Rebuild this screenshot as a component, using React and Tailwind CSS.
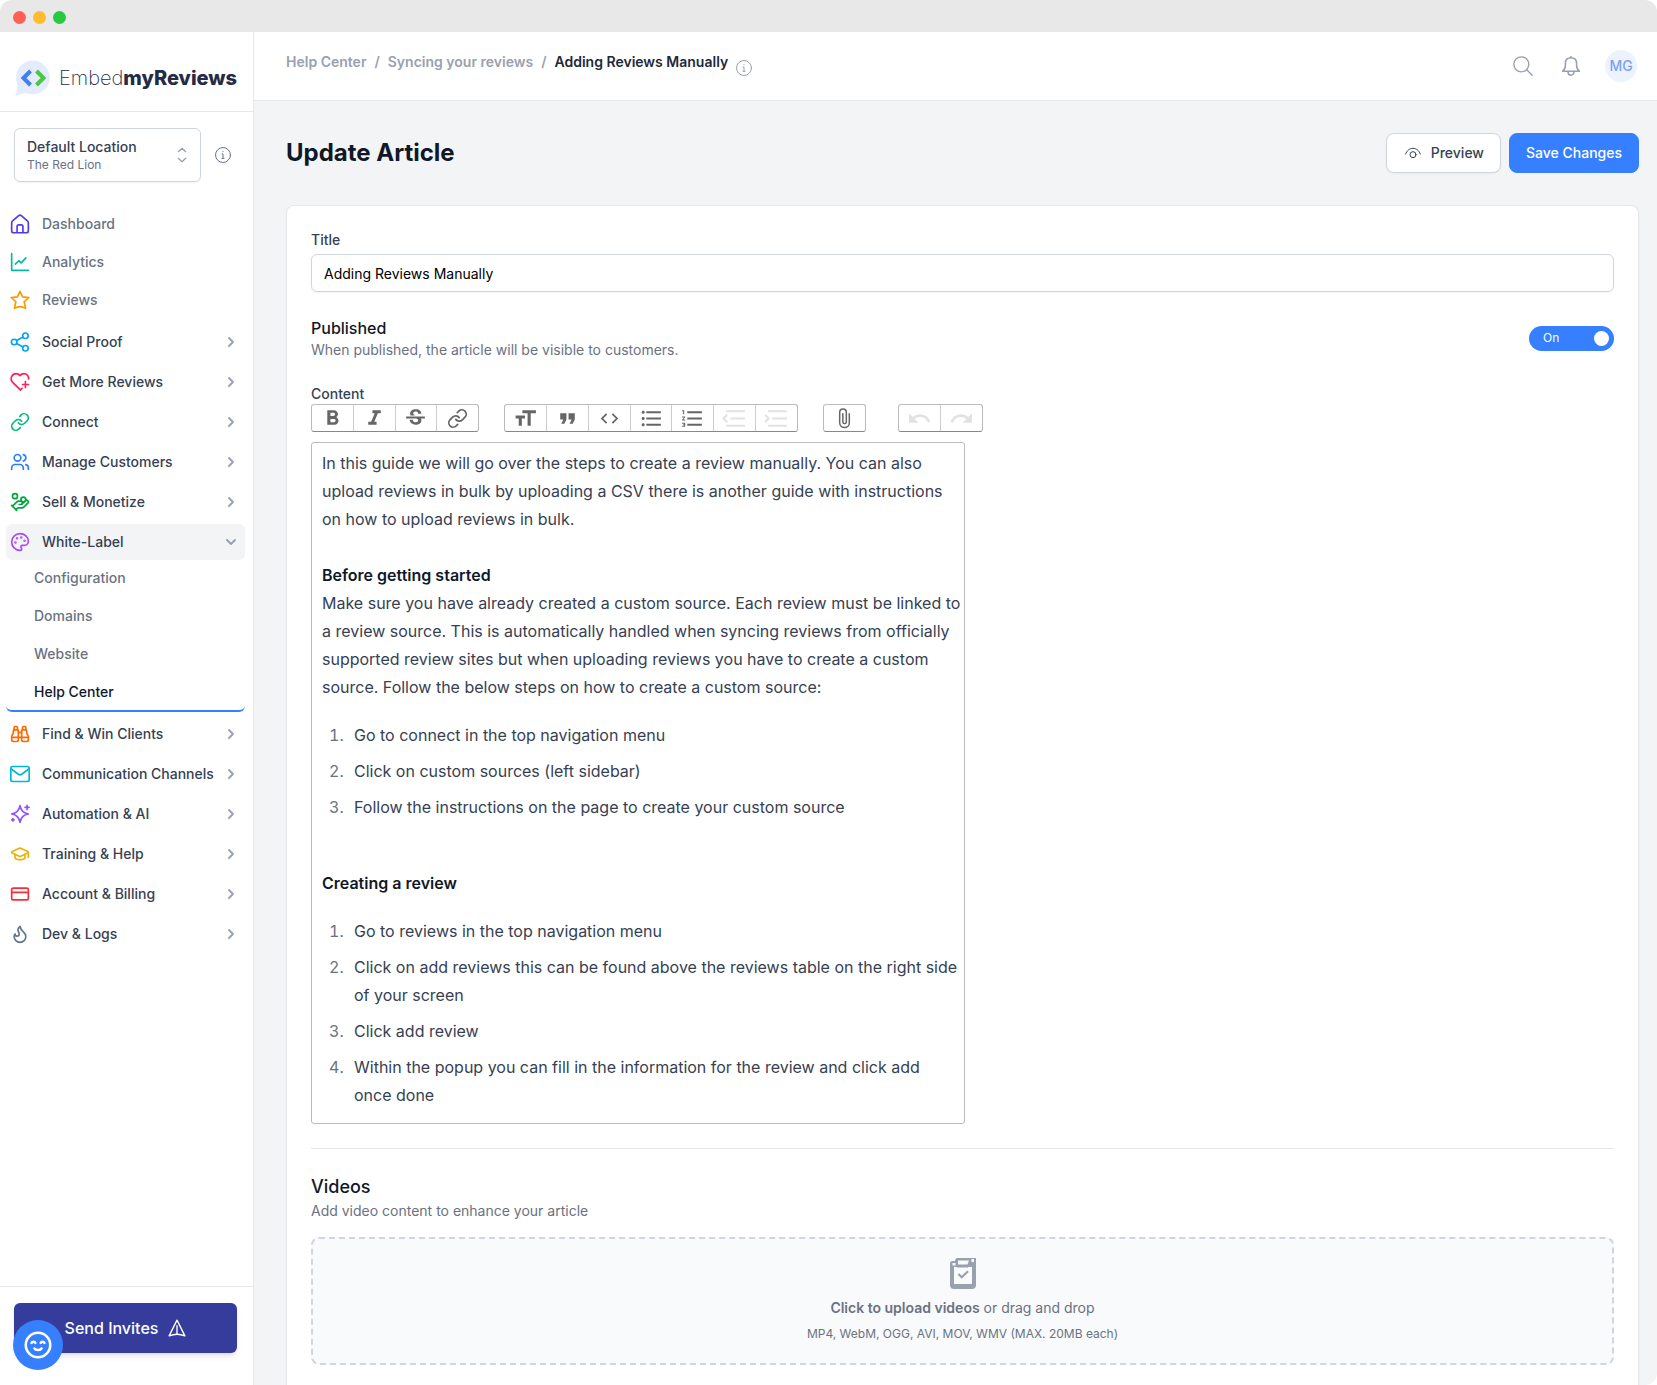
import { useState } from "react";
import {
  Binoculars,
  ChevronDown,
  ChevronRight,
  CreditCard,
  Flame,
  GraduationCap,
  HandCoins,
  Link,
  Palette,
  Users,
} from "lucide-react";
import {
  MdCode,
  MdFormatBold,
  MdFormatItalic,
  MdFormatListBulleted,
  MdFormatListNumbered,
  MdFormatQuote,
  MdFormatSize,
  MdRedo,
  MdStrikethroughS,
  MdUndo,
} from "react-icons/md";

function Svg({ children, className, strokeWidth = 2 }) {
  return (
    <svg
      viewBox="0 0 24 24"
      fill="none"
      stroke="currentColor"
      strokeWidth={strokeWidth}
      strokeLinecap="round"
      strokeLinejoin="round"
      className={className}
      aria-hidden="true"
    >
      {children}
    </svg>
  );
}

function HomeIcon({ className }) {
  return (
    <Svg className={className}>
      <path d="M2 10.500a3 3 0 0 1 1.100-2.300l7-6a3 3 0 0 1 3.800 0l7 6A3 3 0 0 1 22 10.500V20a2.500 2.500 0 0 1-2.500 2.500h-15A2.500 2.500 0 0 1 2 20z" />
      <path d="M8.500 22v-7a2 2 0 0 1 2-2h3a2 2 0 0 1 2 2v7" />
    </Svg>
  );
}

function AnalyticsIcon({ className }) {
  return (
    <Svg className={className}>
      <path d="M2 2v20h20" />
      <path d="m6.500 14.500 4-4 3 2.500 5.500-6" />
    </Svg>
  );
}

function StarIcon({ className }) {
  return (
    <Svg className={className}>
      <path d="m12 1.500 3.100 6.800 7.400.8-5.500 5 1.700 7.900c-2-1.100-4.700-2-6.700-2s-4.700.9-6.700 2L7 14.100l-5.500-5 7.400-.8z" />
    </Svg>
  );
}

function ShareIcon({ className }) {
  return (
    <Svg className={className}>
      <circle cx="5" cy="12" r="3.300" />
      <circle cx="18.500" cy="4.500" r="3.300" />
      <circle cx="18.500" cy="19.500" r="3.300" />
      <path d="m8 10.300 7.600-4.200M8 13.700l7.600 4.200" />
    </Svg>
  );
}

function HeartPlusIcon({ className }) {
  return (
    <Svg className={className}>
      <path d="M12.500 21.500 3.200 12.500C-.8 8.300 2.300 2 7.300 2c2 0 3.500.9 4.700 2.300C13.200 2.900 14.700 2 16.700 2c3.600 0 6 3 5.500 6.300" />
      <path d="M18.500 11.500v7M15 15h7" />
      <path d="m12.500 21.500 2-1.800" />
    </Svg>
  );
}

function MailIcon({ className }) {
  return (
    <Svg className={className}>
      <rect x="1" y="3" width="22" height="18" rx="2" />
      <path d="m1.500 6 8.500 6.300a3.400 3.400 0 0 0 4 0L22.500 6" />
    </Svg>
  );
}

function SparklesIcon({ className }) {
  return (
    <Svg className={className}>
      <path d="M12 2c1 5.800 3.500 9 10 10-6.500 1-9 4.200-10 10-1-5.800-3.500-9-10-10 6.500-1 9-4.200 10-10z" />
      <path d="M20.500 1.500v5M18 4h5M3.500 17.500v3M2 19h3" />
    </Svg>
  );
}

function InfoIcon({ className }) {
  return (
    <Svg className={className} strokeWidth={1.5}>
      <circle cx="12" cy="12" r="11.200" />
      <path d="M10.500 10.500H12V17M10.500 17h3M12 6.800v.4" />
    </Svg>
  );
}

function SearchIcon({ className }) {
  return (
    <Svg className={className} strokeWidth={1.7}>
      <circle cx="10" cy="10" r="9" />
      <path d="m16.500 16.500 6.500 6.500" />
    </Svg>
  );
}

function BellIcon({ className }) {
  return (
    <Svg className={className} strokeWidth={1.9}>
      <path d="M2 18.200c2.300-1.700 3.300-3.700 3.300-7V8.800C5.300 4.600 8 2 12 2s6.700 2.600 6.700 6.800v2.400c0 3.300 1 5.300 3.300 7z" />
      <path d="M12 2V.8M8.500 18.500v1a3.500 3.500 0 0 0 7 0v-1" />
    </Svg>
  );
}

function EyeIcon({ className }) {
  return (
    <Svg className={className} strokeWidth={1.5}>
      <path d="M1 13.500C3 8 7 5 12 5s9 3 11 8.500" />
      <circle cx="12" cy="14.500" r="4.500" />
    </Svg>
  );
}

function SendIcon({ className }) {
  return (
    <Svg className={className} strokeWidth={1.8}>
      <path d="M12 1.500 1.500 22.500c3.500-1.400 7-2.200 10.500-2.200s7 .8 10.500 2.200z" />
      <path d="M12 9v11" />
    </Svg>
  );
}

function ClipboardIcon({ className }) {
  return (
    <svg viewBox="0 0 28 32" fill="none" className={className} aria-hidden="true">
      <path
        fill="currentColor"
        fillRule="evenodd"
        d="M8 0h19v27.500a4 4 0 0 1-4 3.500H5a4 4 0 0 1-4-3.500V5.500A2.500 2.500 0 0 1 3.500 3H6a3 3 0 0 1 2-3zM5 9v17h18V9h-4v.5H8V9zM9 2.500v4h9.500L20 2.500zM22.500 1v3H25V1zM3.500 5v2.500h3V5z"
      />
      <path d="m9.500 16 3.200 3.200 6.300-6" stroke="currentColor" strokeWidth="2.200" />
    </svg>
  );
}

function IndentIcon({ className, outdent }) {
  return (
    <svg viewBox="0 0 24 24" fill="none" stroke="currentColor" strokeWidth="2" className={className} aria-hidden="true">
      <path d="M4 5h18M8 12h14M4 19h18" />
      <path d={outdent ? "M5 8.500 1.500 12 5 15.500" : "m1 8.500 3.500 3.500L1 15.500"} />
    </svg>
  );
}

function OutdentIcon(props) {
  return <IndentIcon outdent {...props} />;
}

function HeadingIcon({ className }) {
  return (
    <svg viewBox="0 0 24 24" fill="currentColor" className={className} aria-hidden="true">
      <path d="M9 4v3h5v12h3V7h5V4zM2.500 12h3v7h3v-7h3V9h-9z" />
    </svg>
  );
}

function AttachIcon({ className }) {
  return (
    <Svg className={className} strokeWidth={1.7}>
      <path d="M17.500 6.500v10.300a5.500 5.500 0 0 1-11 0V5a3.800 3.800 0 0 1 7.600 0v11a2 2 0 0 1-4 0V6.500" />
    </Svg>
  );
}

function Logo() {
  return (
    <a href="#" className="flex items-center gap-[7px] text-[#252b46]">
      <svg viewBox="0 0 38 38" className="size-[38px]" aria-hidden="true">
        <path d="M19 1.500a17 17 0 1 1-7 32.600c-3 .2-7 1.500-10.800 2.700C2.700 34 3.500 29.500 3.300 25A17 17 0 0 1 19 1.500z" fill="#e3ebfd" />
        <path d="m16.500 12-7 7 7 7" fill="none" stroke="#3f7ff0" strokeWidth="4" />
        <path d="m22.500 12 7 7-7 7" fill="none" stroke="#4ac93c" strokeWidth="4" />
      </svg>
      <span className="text-xl font-extralight">
        Embed<span className="font-extrabold">myReviews</span>
      </span>
    </a>
  );
}

const mainLinks = [
  { label: "Dashboard", icon: HomeIcon, color: "text-indigo-600" },
  { label: "Analytics", icon: AnalyticsIcon, color: "text-teal-500" },
  { label: "Reviews", icon: StarIcon, color: "text-amber-500" },
];

const groups = [
  { label: "Social Proof", icon: ShareIcon, color: "text-sky-500" },
  { label: "Get More Reviews", icon: HeartPlusIcon, color: "text-rose-500" },
  { label: "Connect", icon: Link, color: "text-emerald-500" },
  { label: "Manage Customers", icon: Users, color: "text-blue-500" },
  { label: "Sell & Monetize", icon: HandCoins, color: "text-green-600" },
  {
    label: "White-Label",
    icon: Palette,
    color: "text-purple-500",
    children: ["Configuration", "Domains", "Website", "Help Center"],
  },
  { label: "Find & Win Clients", icon: Binoculars, color: "text-orange-500" },
  { label: "Communication Channels", icon: MailIcon, color: "text-cyan-500" },
  { label: "Automation & AI", icon: SparklesIcon, color: "text-violet-500" },
  { label: "Training & Help", icon: GraduationCap, color: "text-yellow-500" },
  { label: "Account & Billing", icon: CreditCard, color: "text-red-500" },
  { label: "Dev & Logs", icon: Flame, color: "text-slate-500" },
];

function NavGroup({ group }) {
  const Icon = group.icon;
  const Chevron = group.children ? ChevronDown : ChevronRight;
  return (
    <li>
      <button
        type="button"
        aria-expanded={Boolean(group.children)}
        className={`flex h-9 w-full items-center rounded-md pr-[6px] pl-1 text-sm font-medium whitespace-nowrap text-gray-700 ${
          group.children ? "bg-gray-100" : ""
        }`}
      >
        <Icon className={`mr-3 size-5 shrink-0 ${group.color}`} />
        {group.label}
        <Chevron className="ml-auto size-4 shrink-0 text-gray-400" strokeWidth={2.8} />
      </button>
      {group.children && (
        <ul className="space-y-[2px]">
          {group.children.map((item) => (
            <li key={item}>
              <a
                href="#"
                className={`flex items-center rounded-md pl-7 text-sm font-medium ${
                  item === "Help Center"
                    ? "h-[38px] border-b-2 border-[#3680ff] text-gray-900"
                    : "h-9 text-gray-500"
                }`}
              >
                {item}
              </a>
            </li>
          ))}
        </ul>
      )}
    </li>
  );
}

function Sidebar() {
  return (
    <aside className="flex w-[254px] shrink-0 flex-col border-r border-gray-200 bg-white">
      <div className="flex h-20 items-center border-b border-gray-200 px-[14px] pt-3">
        <Logo />
      </div>
      <div className="flex items-center gap-[14px] px-[14px] pt-4">
        <button
          type="button"
          className="flex h-[54px] w-[187px] items-center justify-between rounded-md border border-gray-300 pr-[10px] pl-3 text-left shadow-xs"
        >
          <span>
            <span className="block text-sm font-medium text-gray-700">Default Location</span>
            <span className="block text-xs text-gray-500">The Red Lion</span>
          </span>
          <Svg className="size-4 text-gray-400">
            <path d="m6.500 7 5.500-5 5.500 5M6.500 17l5.500 5 5.500-5" />
          </Svg>
        </button>
        <InfoIcon className="size-4 text-gray-500" />
      </div>
      <nav className="pt-6 pr-2 pl-[6px]">
        <ul className="space-y-[2px]">
          {mainLinks.map(({ label, icon: Icon, color }) => (
            <li key={label}>
              <a href="#" className="flex h-9 items-center rounded-md pl-1 text-sm font-medium text-gray-500">
                <Icon className={`mr-3 size-5 ${color}`} />
                {label}
              </a>
            </li>
          ))}
        </ul>
        <ul className="mt-[6px] space-y-1">
          {groups.map((group) => (
            <NavGroup key={group.label} group={group} />
          ))}
        </ul>
      </nav>
      <div className="mt-auto border-t border-gray-200 pt-4 pr-4 pb-8 pl-[14px]">
        <button
          type="button"
          className="flex h-[50px] w-full items-center justify-center gap-[10px] rounded-md bg-[#363c9b] font-medium text-white shadow-md"
        >
          Send Invites
          <SendIcon className="size-[18px]" />
        </button>
      </div>
    </aside>
  );
}

function Header() {
  return (
    <header className="flex h-[69px] items-center justify-between border-b border-gray-200 bg-white pr-5 pl-8">
      <nav aria-label="Breadcrumb" className="flex gap-2 pb-1 text-sm font-semibold text-gray-400">
        <a href="#">Help Center</a>
        <span>/</span>
        <a href="#">Syncing your reviews</a>
        <span>/</span>
        <span className="text-gray-800">Adding Reviews Manually</span>
        <InfoIcon className="mt-2 size-4" />
      </nav>
      <div className="flex items-center gap-7 text-gray-400">
        <button type="button" aria-label="Search">
          <SearchIcon className="size-5" />
        </button>
        <button type="button" aria-label="Notifications">
          <BellIcon className="size-5" />
        </button>
        <button
          type="button"
          className="-ml-1 size-8 rounded-full bg-[#ebf3ff] text-sm font-medium text-[#809ff5]"
        >
          MG
        </button>
      </div>
    </header>
  );
}

const toolbar = [
  {
    name: "text",
    className: "mr-[25px] w-[168px]",
    tools: [
      { label: "Bold", icon: MdFormatBold },
      { label: "Italic", icon: MdFormatItalic },
      { label: "Strikethrough", icon: MdStrikethroughS },
      { label: "Link", icon: Link, small: true },
    ],
  },
  {
    name: "block",
    className: "mr-[25px] w-[294px]",
    tools: [
      { label: "Heading", icon: HeadingIcon },
      { label: "Quote", icon: MdFormatQuote },
      { label: "Code", icon: MdCode, small: true },
      { label: "Bullets", icon: MdFormatListBulleted },
      { label: "Numbers", icon: MdFormatListNumbered },
      { label: "Decrease Level", icon: OutdentIcon, disabled: true },
      { label: "Increase Level", icon: IndentIcon, disabled: true },
    ],
  },
  {
    name: "file",
    className: "mr-8 w-[43px]",
    tools: [{ label: "Attach Files", icon: AttachIcon, small: true }],
  },
  {
    name: "history",
    className: "w-[85px]",
    tools: [
      { label: "Undo", icon: MdUndo, disabled: true },
      { label: "Redo", icon: MdRedo, disabled: true },
    ],
  },
];

function Toolbar() {
  return (
    <div className="flex">
      {toolbar.map((group) => (
        <div
          key={group.name}
          className={`flex divide-x divide-[#ccc] rounded-[3px] border border-[#bbb] border-b-[#888] ${group.className}`}
        >
          {group.tools.map(({ label, icon: Icon, disabled, small }) => (
            <button
              key={label}
              type="button"
              aria-label={label}
              disabled={disabled}
              className={`flex h-[26px] flex-1 items-center justify-center ${
                disabled ? "text-[#e2e2e2]" : "text-[#666]"
              }`}
            >
              <Icon className={small ? "size-[21px]" : "size-[25px]"} />
            </button>
          ))}
        </div>
      ))}
    </div>
  );
}

function Steps({ items }) {
  return (
    <ol className="mt-5 list-decimal pl-[26px] marker:text-gray-500">
      {items.map((item) => (
        <li key={item} className="mb-2 pr-1 pl-[6px]">
          {item}
        </li>
      ))}
    </ol>
  );
}

function Editor() {
  return (
    <div
      role="textbox"
      aria-labelledby="content-label"
      aria-multiline="true"
      contentEditable
      suppressContentEditableWarning
      className="mt-[10px] max-w-[654px] rounded-[3px] border border-[#bbb] py-[6px] pl-[10px] leading-7 text-gray-700 outline-none"
    >
      <p>
        In this guide we will go over the steps to create a review manually. You can also upload reviews in bulk by
        uploading a CSV there is another guide with instructions on how to upload reviews in bulk.
      </p>
      <p className="mt-7">
        <strong className="font-semibold text-gray-900">Before getting started</strong>
        <br />
        Make sure you have already created a custom source. Each review must be linked to a review source. This is
        automatically handled when syncing reviews from officially supported review sites but when uploading reviews you
        have to create a custom source. Follow the below steps on how to create a custom source:
      </p>
      <Steps
        items={[
          "Go to connect in the top navigation menu",
          "Click on custom sources (left sidebar)",
          "Follow the instructions on the page to create your custom source",
        ]}
      />
      <p className="mt-12">
        <strong className="font-semibold text-gray-900">Creating a review</strong>
      </p>
      <Steps
        items={[
          "Go to reviews in the top navigation menu",
          "Click on add reviews this can be found above the reviews table on the right side of your screen",
          "Click add review",
          "Within the popup you can fill in the information for the review and click add once done",
        ]}
      />
    </div>
  );
}

function ArticleForm() {
  const [title, setTitle] = useState("Adding Reviews Manually");
  const [published, setPublished] = useState(true);

  return (
    <form className="flex-1 rounded-t-lg border border-b-0 border-gray-200 bg-white px-6 pt-6 pb-5 shadow-xs">
      <label htmlFor="title" className="block text-sm font-medium text-gray-700">
        Title
      </label>
      <input
        id="title"
        type="text"
        value={title}
        onChange={(e) => setTitle(e.target.value)}
        className="mt-1 block h-[38px] w-full rounded-md border border-gray-300 px-3 text-sm text-black shadow-xs"
      />

      <div className="mt-6 flex items-center justify-between">
        <div>
          <h3 className="text-base font-medium text-gray-900">Published</h3>
          <p className="text-sm text-gray-500">When published, the article will be visible to customers.</p>
        </div>
        <label className="flex h-[25px] w-[85px] items-center justify-between rounded-full bg-[#3680ff] pr-[5px] pl-[14px] text-xs text-white">
          <input
            type="checkbox"
            aria-label="Published"
            checked={published}
            onChange={(e) => setPublished(e.target.checked)}
            className="sr-only"
          />
          {published ? "On" : "Off"}
          <span className="size-[15px] rounded-full bg-white" />
        </label>
      </div>

      <div id="content-label" className="mt-6 text-sm font-medium text-gray-700">
        Content
      </div>
      <Toolbar />
      <Editor />

      <hr className="mt-6 border-gray-200" />

      <h2 className="mt-6 text-lg font-medium text-gray-900">Videos</h2>
      <p className="text-sm text-gray-500">Add video content to enhance your article</p>
      <label className="mt-4 flex h-32 flex-col items-center justify-center rounded-lg border-2 border-dashed border-gray-300 bg-gray-50 pb-[2px] text-gray-500">
        <ClipboardIcon className="h-8 w-7 text-gray-400" />
        <span className="mt-2 text-sm">
          <span className="font-semibold">Click to upload videos</span> or drag and drop
        </span>
        <span className="mt-2 text-xs">MP4, WebM, OGG, AVI, MOV, WMV (MAX. 20MB each)</span>
        <input type="file" accept="video/*" multiple className="sr-only" />
      </label>
    </form>
  );
}

export default function App() {
  return (
    <div className="flex min-h-screen flex-col overflow-hidden rounded-xl bg-white font-[Inter,sans-serif]">
      <div className="flex h-8 items-center gap-[7px] bg-[#e8e8e8] px-[13px] pt-[2px]">
        <span className="size-[13px] rounded-full bg-[#ff5f57]" />
        <span className="size-[13px] rounded-full bg-[#febc2e]" />
        <span className="size-[13px] rounded-full bg-[#28c840]" />
      </div>
      <div className="flex flex-1">
        <Sidebar />
        <div className="flex min-w-0 flex-1 flex-col bg-gray-100">
          <Header />
          <main className="flex flex-1 flex-col pt-8 pr-[18px] pl-8">
            <div className="mb-8 flex items-center justify-between">
              <h1 className="text-2xl font-bold text-gray-900">Update Article</h1>
              <div className="flex gap-2 text-sm font-medium">
                <button
                  type="button"
                  className="flex h-10 items-center gap-[10px] rounded-lg border border-gray-300 bg-white pr-4 pl-[18px] text-gray-700 shadow-xs"
                >
                  <EyeIcon className="size-4" />
                  Preview
                </button>
                <button
                  type="button"
                  className="h-10 rounded-lg border border-[#3680ff] bg-[#3680ff] px-4 text-white"
                >
                  Save Changes
                </button>
              </div>
            </div>
            <ArticleForm />
          </main>
        </div>
      </div>
      <button
        type="button"
        aria-label="Open chat"
        className="fixed bottom-[15px] left-[13px] flex size-[50px] items-center justify-center rounded-full bg-[#3680ff] text-white"
      >
        <Svg className="size-7" strokeWidth={2.2}>
          <circle cx="12" cy="12" r="10.500" />
          <path d="M6.500 10.200c.5-1.300 2.700-1.300 3.200 0M14.300 10.200c.5-1.300 2.700-1.300 3.200 0M9 15c.8 1.700 5.200 1.700 6 0" />
        </Svg>
      </button>
    </div>
  );
}
